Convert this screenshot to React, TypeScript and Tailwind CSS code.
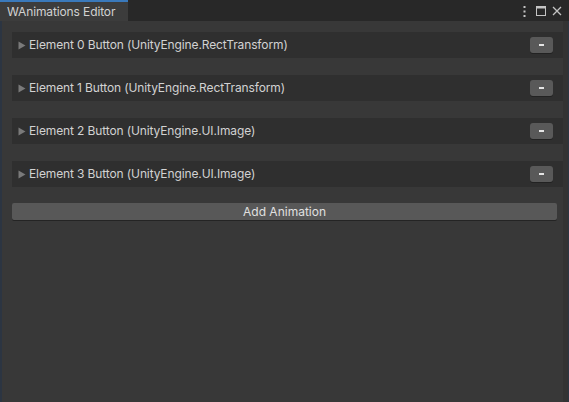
import React from "react";

const elements = [
  "Element 0 Button (UnityEngine.RectTransform)",
  "Element 1 Button (UnityEngine.RectTransform)",
  "Element 2 Button (UnityEngine.UI.Image)",
  "Element 3 Button (UnityEngine.UI.Image)",
];

function Foldout({ label }: { label: string }) {
  return (
    <div className="flex h-[26px] items-center bg-[#2f2f2f] pl-[6px] pr-[10px]">
      <svg width="8" height="9" viewBox="0 0 8 9" className="mr-[3px]">
        <path d="M0.5 0.5 L7.5 4.5 L0.5 8.5 Z" fill="#7a7a7a" />
      </svg>
      <span className="flex-1 text-[12px] tracking-[-0.01em] text-[#d2d2d2] leading-none">{label}</span>
      <button className="flex h-[16px] w-[23px] items-center justify-center rounded-[3px] bg-[#595959] shadow-[0_1px_0_#222]">
        <span className="block h-[1.5px] w-[5px] bg-[#e4e4e4]" />
      </button>
    </div>
  );
}

export default function App() {
  return (
    <div
      className="flex h-[402px] w-[569px] flex-col bg-[#383838]"
      style={{ fontFamily: "Inter, 'Noto Sans', sans-serif" }}
    >
      {/* tab strip */}
      <div className="flex h-[21px] items-stretch bg-[#282828]">
        <div className="flex w-[128px] flex-col bg-[#3c3c3c]">
          <div className="h-[2px] bg-[#3a79bb]" />
          <div className="flex flex-1 items-center pl-[7px] text-[12px] tracking-[-0.01em] text-[#d2d2d2]">
            WAnimations Editor
          </div>
        </div>
        <div className="flex-1" />
        <div className="flex items-center pr-[7px] pt-[1px]">
          <svg width="3" height="11" viewBox="0 0 3 11" className="mr-[10px]">
            <rect x="0.5" y="0" width="2" height="2" fill="#c4c4c4" />
            <rect x="0.5" y="4.5" width="2" height="2" fill="#c4c4c4" />
            <rect x="0.5" y="9" width="2" height="2" fill="#c4c4c4" />
          </svg>
          <svg width="10" height="10" viewBox="0 0 10 10" className="mr-[6px]">
            <rect x="0.5" y="0.5" width="9" height="9" fill="none" stroke="#c4c4c4" />
            <rect x="0.5" y="0.5" width="9" height="2" fill="#c4c4c4" />
          </svg>
          <svg width="10" height="10" viewBox="0 0 10 10">
            <path d="M1 1 L9 9 M9 1 L1 9" stroke="#c4c4c4" strokeWidth="1.3" />
          </svg>
        </div>
      </div>

      {/* panel body */}
      <div className="flex flex-1 border-l-[2px] border-l-[#2c3542]">
        <div className="flex flex-1 flex-col pl-[10px] pt-[11px]">
          <div className="flex flex-col gap-[17px]">
            {elements.map((e) => (
              <Foldout key={e} label={e} />
            ))}
          </div>
          <button className="mr-[6px] mt-[16px] flex h-[17px] items-center justify-center rounded-[2px] bg-[#585858] text-[12px] text-[#e0e0e0] shadow-[0_1px_0_#242424]">
            Add Animation
          </button>
        </div>
        <div className="w-[6px] bg-[#333333] border-r border-r-[#2c3542]" />
      </div>
    </div>
  );
}
